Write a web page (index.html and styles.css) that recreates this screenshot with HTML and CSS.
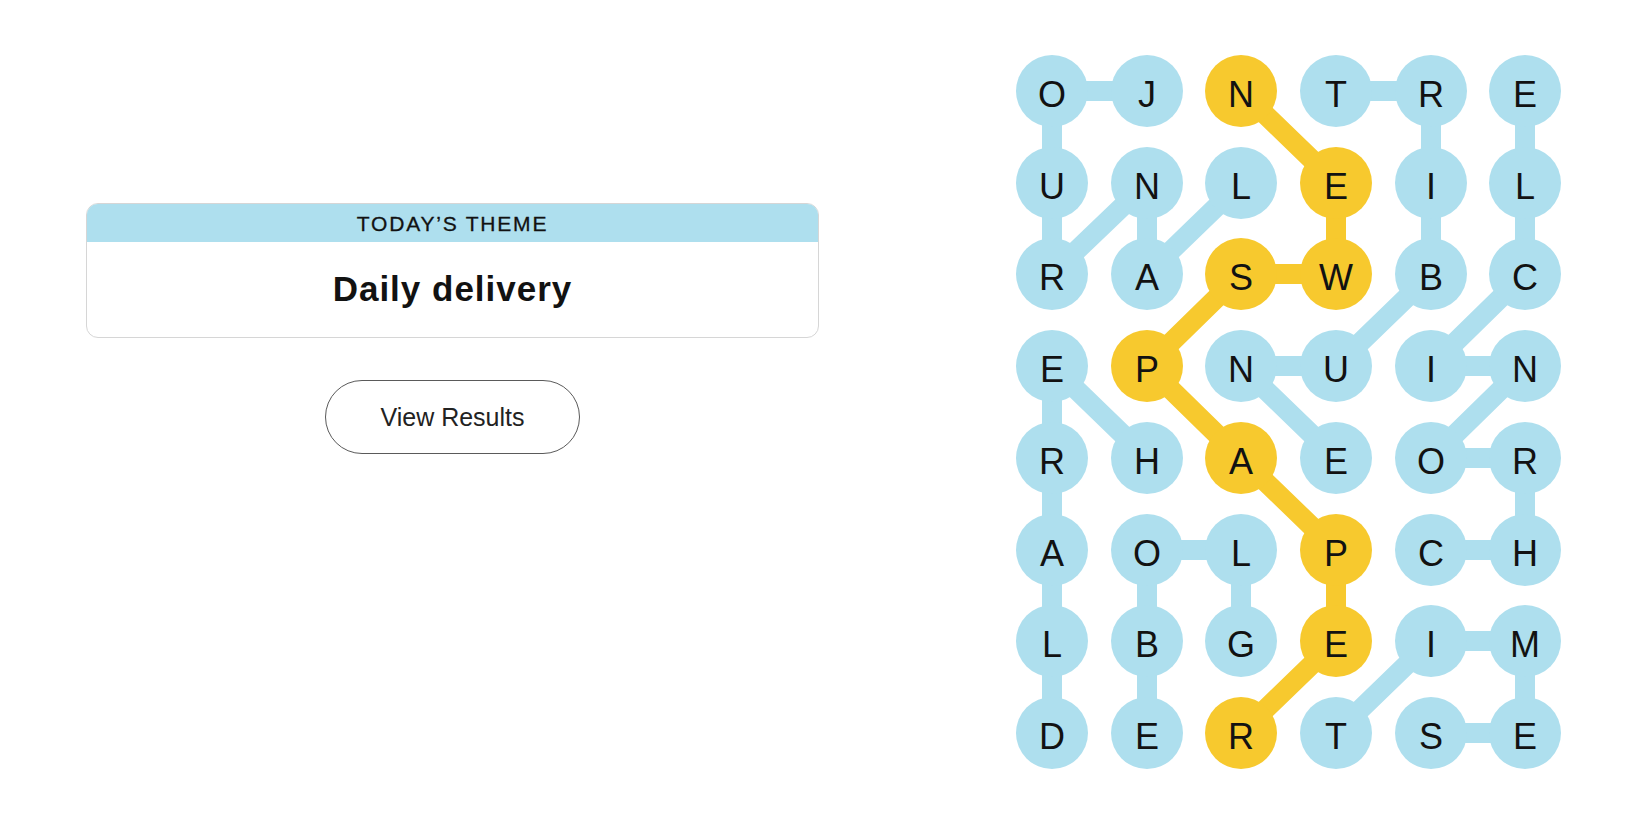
FILE: index.html
```html
<!DOCTYPE html>
<html lang="en">
<head>
<meta charset="utf-8">
<title>Strands</title>
<link rel="stylesheet" href="styles.css">
</head>
<body>
<div class="page">
  <section class="left">
    <div class="theme-card">
      <div class="theme-head">TODAY’S THEME</div>
      <div class="theme-body">Daily delivery</div>
    </div>
    <button class="results-btn">View Results</button>
  </section>
  <section class="board">
    <svg class="grid" width="580" height="750" viewBox="1000 40 580 750" xmlns="http://www.w3.org/2000/svg">
      <g class="path-blue">
        <polyline points="1147,91 1052,91 1052,183 1052,274 1147,183 1147,274 1241,183"/>
        <polyline points="1336,91 1431,91 1431,183 1431,274 1336,366 1241,366 1336,458"/>
        <polyline points="1431,550 1525,550 1525,458 1431,458 1525,366 1431,366 1525,274 1525,183 1525,91"/>
        <polyline points="1147,458 1052,366 1052,458 1052,550 1052,641 1052,733"/>
        <polyline points="1241,641 1241,550 1147,550 1147,641 1147,733"/>
        <polyline points="1336,733 1431,641 1525,641 1525,733 1431,733"/>
      </g>
      <g class="path-yellow">
        <polyline points="1241,91 1336,183 1336,274 1241,274 1147,366 1241,458 1336,550 1336,641 1241,733"/>
      </g>
      <g class="dots-blue">
        <circle cx="1052" cy="91" r="36"/><circle cx="1147" cy="91" r="36"/><circle cx="1336" cy="91" r="36"/><circle cx="1431" cy="91" r="36"/><circle cx="1525" cy="91" r="36"/>
        <circle cx="1052" cy="183" r="36"/><circle cx="1147" cy="183" r="36"/><circle cx="1241" cy="183" r="36"/><circle cx="1431" cy="183" r="36"/><circle cx="1525" cy="183" r="36"/>
        <circle cx="1052" cy="274" r="36"/><circle cx="1147" cy="274" r="36"/><circle cx="1431" cy="274" r="36"/><circle cx="1525" cy="274" r="36"/>
        <circle cx="1052" cy="366" r="36"/><circle cx="1241" cy="366" r="36"/><circle cx="1336" cy="366" r="36"/><circle cx="1431" cy="366" r="36"/><circle cx="1525" cy="366" r="36"/>
        <circle cx="1052" cy="458" r="36"/><circle cx="1147" cy="458" r="36"/><circle cx="1336" cy="458" r="36"/><circle cx="1431" cy="458" r="36"/><circle cx="1525" cy="458" r="36"/>
        <circle cx="1052" cy="550" r="36"/><circle cx="1147" cy="550" r="36"/><circle cx="1241" cy="550" r="36"/><circle cx="1431" cy="550" r="36"/><circle cx="1525" cy="550" r="36"/>
        <circle cx="1052" cy="641" r="36"/><circle cx="1147" cy="641" r="36"/><circle cx="1241" cy="641" r="36"/><circle cx="1431" cy="641" r="36"/><circle cx="1525" cy="641" r="36"/>
        <circle cx="1052" cy="733" r="36"/><circle cx="1147" cy="733" r="36"/><circle cx="1336" cy="733" r="36"/><circle cx="1431" cy="733" r="36"/><circle cx="1525" cy="733" r="36"/>
      </g>
      <g class="dots-yellow">
        <circle cx="1241" cy="91" r="36"/>
        <circle cx="1336" cy="183" r="36"/>
        <circle cx="1241" cy="274" r="36"/><circle cx="1336" cy="274" r="36"/>
        <circle cx="1147" cy="366" r="36"/>
        <circle cx="1241" cy="458" r="36"/>
        <circle cx="1336" cy="550" r="36"/>
        <circle cx="1336" cy="641" r="36"/>
        <circle cx="1241" cy="733" r="36"/>
      </g>
      <g class="letters">
        <text x="1052" y="107">O</text><text x="1147" y="107">J</text><text x="1241" y="107">N</text><text x="1336" y="107">T</text><text x="1431" y="107">R</text><text x="1525" y="107">E</text>
        <text x="1052" y="199">U</text><text x="1147" y="199">N</text><text x="1241" y="199">L</text><text x="1336" y="199">E</text><text x="1431" y="199">I</text><text x="1525" y="199">L</text>
        <text x="1052" y="290">R</text><text x="1147" y="290">A</text><text x="1241" y="290">S</text><text x="1336" y="290">W</text><text x="1431" y="290">B</text><text x="1525" y="290">C</text>
        <text x="1052" y="382">E</text><text x="1147" y="382">P</text><text x="1241" y="382">N</text><text x="1336" y="382">U</text><text x="1431" y="382">I</text><text x="1525" y="382">N</text>
        <text x="1052" y="474">R</text><text x="1147" y="474">H</text><text x="1241" y="474">A</text><text x="1336" y="474">E</text><text x="1431" y="474">O</text><text x="1525" y="474">R</text>
        <text x="1052" y="566">A</text><text x="1147" y="566">O</text><text x="1241" y="566">L</text><text x="1336" y="566">P</text><text x="1431" y="566">C</text><text x="1525" y="566">H</text>
        <text x="1052" y="657">L</text><text x="1147" y="657">B</text><text x="1241" y="657">G</text><text x="1336" y="657">E</text><text x="1431" y="657">I</text><text x="1525" y="657">M</text>
        <text x="1052" y="749">D</text><text x="1147" y="749">E</text><text x="1241" y="749">R</text><text x="1336" y="749">T</text><text x="1431" y="749">S</text><text x="1525" y="749">E</text>
      </g>
    </svg>
  </section>
</div>
</body>
</html>
```

FILE: styles.css
```css
* { box-sizing: border-box; }
html, body {
  margin: 0;
  padding: 0;
  background: #ffffff;
}
body {
  font-family: "Liberation Sans", Arial, sans-serif;
  color: #121212;
  width: 1650px;
  height: 825px;
  overflow: hidden;
}
.page {
  display: flex;
  align-items: flex-start;
  padding-left: 86px;
}
.left {
  width: 733px;
  padding-top: 203px;
  display: flex;
  flex-direction: column;
  align-items: center;
}
.theme-card {
  width: 733px;
  height: 135px;
  border: 1px solid #d6d6d6;
  border-radius: 12px;
  overflow: hidden;
  display: flex;
  flex-direction: column;
  background: #ffffff;
}
.theme-head {
  height: 39px;
  margin: -1px -1px 0 -1px;
  background: #aedfee;
  display: flex;
  align-items: center;
  justify-content: center;
  font-size: 21px;
  letter-spacing: 1.8px;
  color: #121212;
  padding-top: 2px;
  -webkit-text-stroke: 0.3px #121212;
}
.theme-body {
  flex: 1;
  display: flex;
  align-items: center;
  justify-content: center;
  font-size: 35px;
  font-weight: 700;
  letter-spacing: 1px;
  color: #121212;
  padding-bottom: 2px;
}
.results-btn {
  margin-top: 42px;
  width: 255px;
  height: 74px;
  border: 1px solid #5a5a5a;
  border-radius: 37px;
  background: #ffffff;
  font-family: "Liberation Sans", Arial, sans-serif;
  font-size: 25px;
  color: #222222;
  padding: 0;
  cursor: pointer;
}
.board {
  margin-left: 181px;
  margin-top: 40px;
  width: 580px;
  height: 750px;
}
.grid { display: block; }
.path-blue polyline {
  fill: none;
  stroke: #aedfee;
  stroke-width: 20;
  stroke-linejoin: round;
  stroke-linecap: round;
}
.path-yellow polyline {
  fill: none;
  stroke: #f7c92e;
  stroke-width: 20;
  stroke-linejoin: round;
  stroke-linecap: round;
}
.dots-blue circle { fill: #aedfee; }
.dots-yellow circle { fill: #f7c92e; }
.letters text {
  font-family: "Liberation Sans", Arial, sans-serif;
  font-size: 36px;
  fill: #121212;
  text-anchor: middle;
}
```
